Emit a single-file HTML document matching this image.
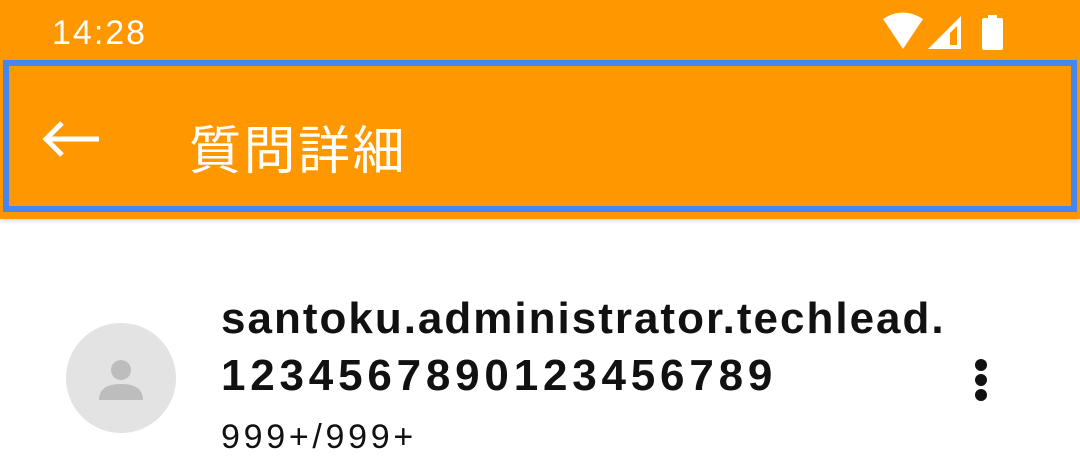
<!DOCTYPE html>
<html><head><meta charset="utf-8"><style>
body{margin:0;width:1080px;height:455px;overflow:hidden;background:#fff;font-family:"Liberation Sans","Noto Sans CJK JP",sans-serif;position:relative}
.top{position:absolute;left:0;top:0;width:1080px;height:219px;background:#FF9800;box-shadow:0 2px 4px rgba(0,0,0,.15)}
.box{position:absolute;left:3px;top:60px;width:1062px;height:140px;border:6px solid #4487F0}
.time{position:absolute;left:52px;top:14px;font-size:34px;letter-spacing:2px;color:#fff}
.title{position:absolute;left:189px;top:126px;font-size:52px;letter-spacing:2.5px;color:#fff;line-height:1}
.av{position:absolute;left:66px;top:323px;width:110px;height:110px;border-radius:50%;background:#e3e3e3}
.name{position:absolute;left:221px;font-size:44px;font-weight:bold;line-height:57px;color:#111;white-space:nowrap}
.cnt{position:absolute;left:221px;top:418px;font-size:34px;letter-spacing:3.7px;color:#111}
.dot{position:absolute;left:975px;width:12px;height:12px;border-radius:50%;background:#111}
</style></head><body>
<div class="top">
<div class="time">14:28</div>
<svg style="position:absolute;left:880px;top:12px" width="130" height="42">
<path d="M3 7 Q23 -6 43 7 L23 37 Z" fill="#fff"/>
<path d="M48 37 L81 4 L81 37 Z" fill="#fff"/>
<path d="M70 21 L77 14 L77 33 L70 33 Z" fill="#FF9800"/>
<rect x="102" y="6" width="21" height="32" rx="2" fill="#fff"/>
<rect x="108" y="3" width="9" height="4" fill="#fff"/>
</svg>
<div class="box"></div>
<svg style="position:absolute;left:40px;top:115px" width="65" height="50"><path d="M59 24 H8 M22 8 L6 24 L22 40" stroke="#fff" stroke-width="5" fill="none"/></svg>
<div class="title">質問詳細</div>
</div>
<div class="av"><svg width="110" height="110"><circle cx="55" cy="47" r="10" fill="#bdbdbd"/><path d="M33 77 Q33 61 55 61 Q77 61 77 77 Z" fill="#bdbdbd"/></svg></div>
<div class="name" style="top:290px;letter-spacing:2px">santoku.administrator.techlead.</div>
<div class="name" style="top:347px;letter-spacing:4.8px">1234567890123456789</div>
<div class="cnt">999+/999+</div>
<div class="dot" style="top:359px"></div><div class="dot" style="top:374px"></div><div class="dot" style="top:389px"></div>
</body></html>
